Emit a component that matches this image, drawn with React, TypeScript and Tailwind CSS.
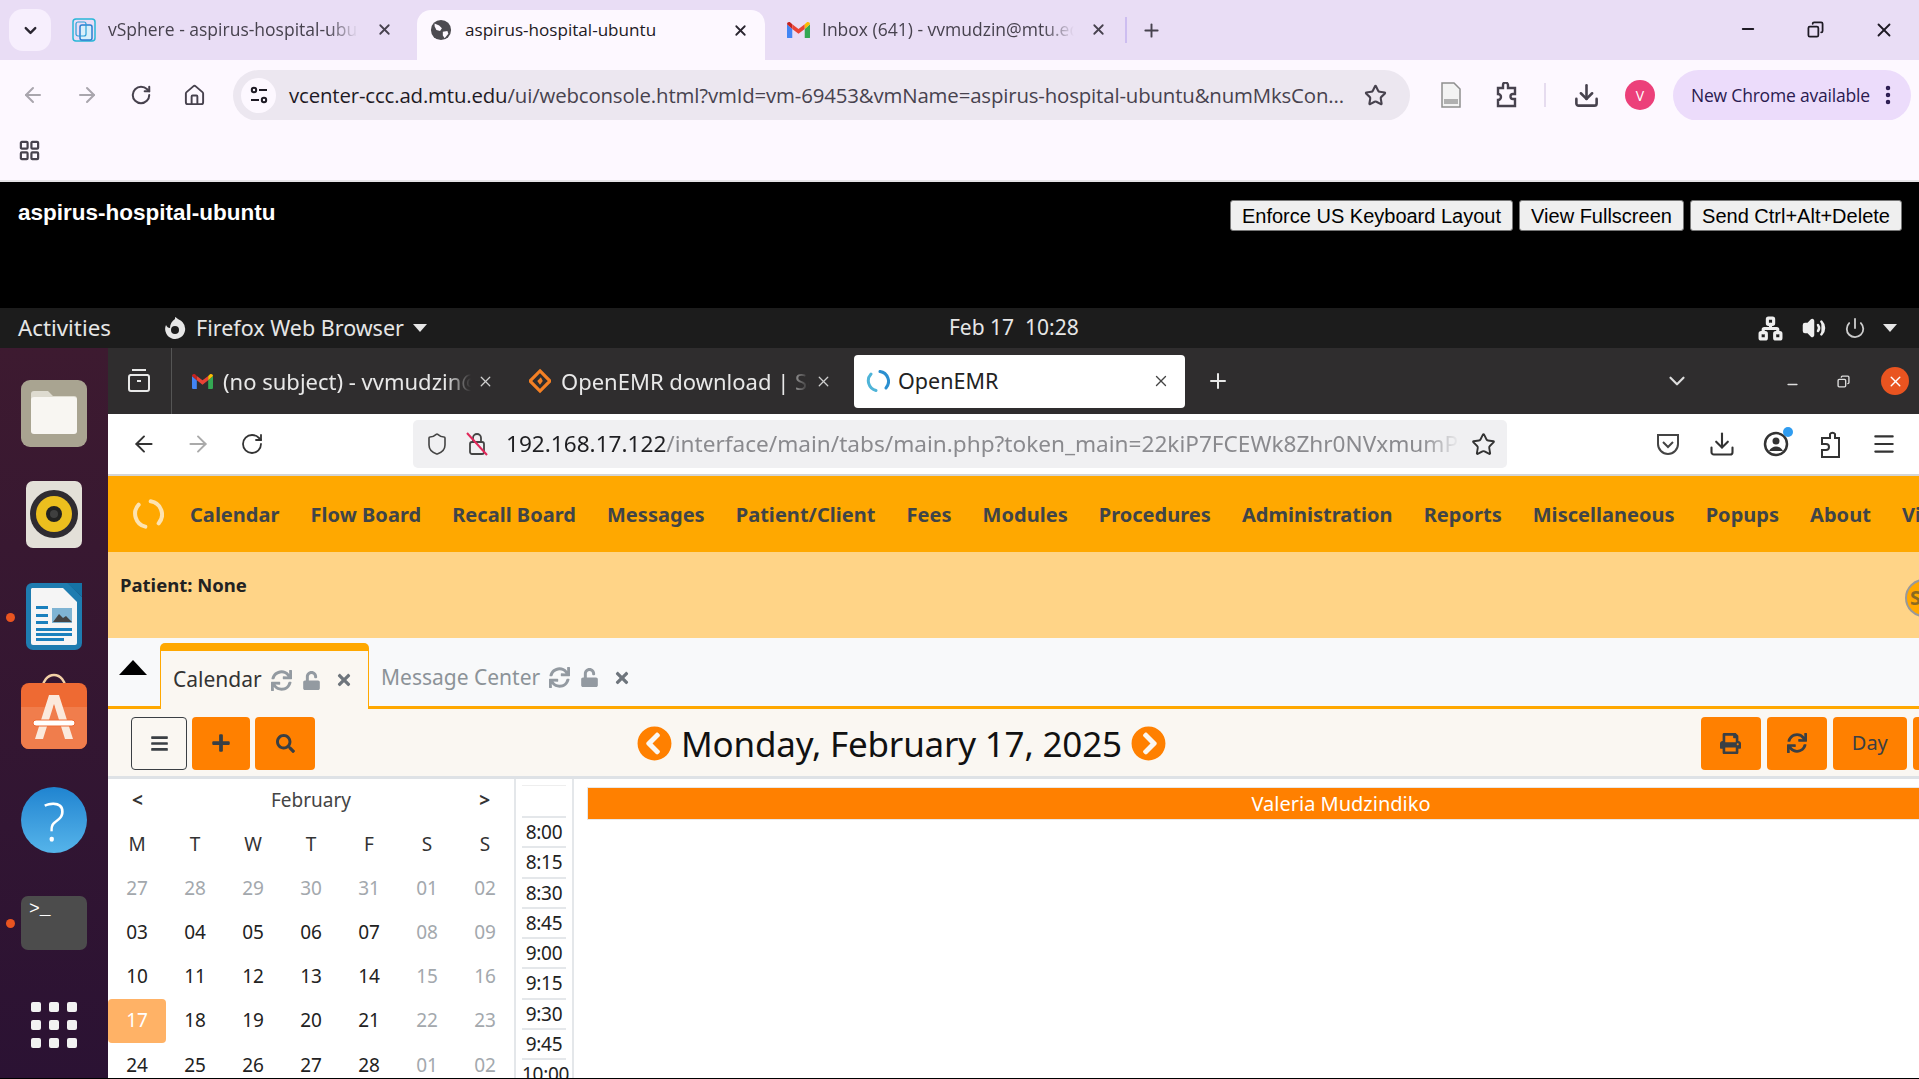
import React from "react";
import { ArrowLeft, ArrowRight, RotateCw, Home, ChevronDown, X, Plus, Minus, Star, Download, EllipsisVertical, LayoutGrid, Shield, Menu, Volume2, Power, Network, Copy } from "lucide-react";
import { FaSync, FaUnlock, FaTimes, FaBars, FaPlus, FaSearch, FaPrint, FaChevronCircleLeft, FaChevronCircleRight } from "react-icons/fa";
import { FiChevronDown } from "react-icons/fi";

const GmailM = ({ s = 24 }: { s?: number }) => (
  <svg width={s} height={s * 0.78} viewBox="0 0 24 18" className="shrink-0">
    <path d="M0 3v13.5A1.5 1.5 0 0 0 1.500 18H5.500V8l-5.500-5z" fill="#4285f4" />
    <path d="M18.500 18h4A1.500 1.500 0 0 0 24 16.500V3l-5.500 5z" fill="#34a853" />
    <path d="M0 3l5.500 5V3L3.500 1.200C2 0 0 1 0 3z" fill="#c5221f" />
    <path d="M5.500 3v5L12 13l6.500-5V3L12 8z" fill="#ea4335" />
    <path d="M18.500 3v5L24 3c0-2-2-3-3.500-1.800z" fill="#fbbc04" />
  </svg>
);

const Spinner = ({ s, c1, c2 }: { s: number; c1: string; c2: string }) => (
  <svg width={s} height={s} viewBox="0 0 24 24" fill="none" className="shrink-0">
    <path d="M14 2.500A10 10 0 0 1 20 19" stroke={c1} strokeWidth="3" strokeLinecap="round" />
    <path d="M10 21.500A10 10 0 0 1 5 5" stroke={c2} strokeWidth="3" strokeLinecap="round" />
  </svg>
);

const ChromeTabBar = () => (
  <div className="h-[60px] bg-[#e9ddf5] flex items-start relative text-[#47424e] text-[17.500px]">
    <div className="ml-[9px] mt-[9px] w-[42px] h-[42px] rounded-[14px] bg-[#f7effd] flex items-center justify-center">
      <ChevronDown size={19} strokeWidth={3} color="#2a2630" />
    </div>
    <div className="ml-[21px] w-[345px] h-[60px] flex items-center pb-[1px]">
      <svg width="24" height="24" viewBox="0 0 24 24" fill="none" className="shrink-0">
        <rect x="1" y="1" width="22" height="22" rx="3" stroke="#29b6d8" strokeWidth="1.500" />
        <rect x="8" y="7" width="12" height="15" rx="2" stroke="#2a7fd0" strokeWidth="1.500" fill="#d9effa" />
        <rect x="4" y="4" width="10" height="14" rx="2" stroke="#2a9fd8" strokeWidth="1.200" />
      </svg>
      <span className="ml-[12px] w-[250px] overflow-hidden whitespace-nowrap [mask-image:linear-gradient(to_right,black_88%,transparent)] font-['Open_Sans',sans-serif]">vSphere - aspirus-hospital-ubuntu</span>
      <X size={17} strokeWidth={2.500} className="ml-[18px]" color="#47424e" />
    </div>
    <div className="mt-[10px] w-[348px] h-[50px] bg-[#fdf8ff] rounded-t-[14px] flex items-center pl-[13px] pr-[16px] pb-[10px] text-[#1e1a24] font-['Open_Sans',sans-serif]">
      <svg width="22" height="22" viewBox="0 0 24 24" className="shrink-0">
        <circle cx="12" cy="12" r="11" fill="#4c4a50" />
        <path d="M5 5l5 2 3 3-2 3-4-1-2-4zM14 14l5-1 1 3-4 5-2-3z" fill="#fdf8ff" />
      </svg>
      <span className="ml-[13px] whitespace-nowrap flex-1 text-[17.100px]">aspirus-hospital-ubuntu</span>
      <X size={17} strokeWidth={2.500} color="#2a2630" />
    </div>
    <div className="ml-[22px] w-[338px] h-[60px] flex items-center pb-[1px] font-['Open_Sans',sans-serif]">
      <GmailM s={23} />
      <span className="ml-[12px] w-[252px] overflow-hidden whitespace-nowrap [mask-image:linear-gradient(to_right,black_88%,transparent)]">Inbox (641) - vvmudzin@mtu.edu</span>
      <X size={17} strokeWidth={2.500} className="ml-[16px]" />
    </div>
    <div className="w-[2px] h-[26px] mt-[17px] bg-[#cdbdf0]" />
    <Plus size={21} strokeWidth={2.200} className="ml-[14px] mt-[20px]" color="#47424e" />
    <Minus size={18} strokeWidth={2.500} className="ml-[577px] mt-[20px]" color="#1e1a24" />
    <Copy size={17} strokeWidth={2.500} className="ml-[50px] mt-[21px] -scale-x-100" color="#1e1a24" />
    <X size={22} strokeWidth={2} className="ml-[49px] mt-[19px]" color="#1e1a24" />
  </div>
);

const ChromeToolbar = () => (
  <div className="h-[60px] bg-[#fdf8ff] flex items-center pt-[10px]">
    <ArrowLeft size={24} strokeWidth={2} color="#a9a6ad" className="ml-[21px]" />
    <ArrowRight size={24} strokeWidth={2} color="#a9a6ad" className="ml-[30px]" />
    <RotateCw size={22} strokeWidth={2.200} color="#47424e" className="ml-[31px]" />
    <Home size={23} strokeWidth={2} color="#47424e" className="ml-[31px]" />
    <div className="ml-[27px] w-[1177px] h-[51px] rounded-full bg-[#ece7f0] flex items-center pl-[8px] shrink-0">
      <div className="w-[35px] h-[35px] rounded-full bg-[#fdf8ff] flex items-center justify-center shrink-0">
        <svg width="20" height="20" viewBox="0 0 20 20" fill="none" stroke="#1e1a24" strokeWidth="2">
          <circle cx="5" cy="5" r="2.200" /><path d="M10 5h8M2 15h8" /><circle cx="15" cy="15" r="2.200" />
        </svg>
      </div>
      <span className="ml-[13px] text-[20.400px] whitespace-nowrap font-['Open_Sans',sans-serif] text-[#47424e] tracking-[-0.15px]"><span className="text-[#1e1a24]">vcenter-ccc.ad.mtu.edu</span>/ui/webconsole.html?vmId=vm-69453&amp;vmName=aspirus-hospital-ubuntu&amp;numMksCon...</span>
    </div>
    <Star size={23} strokeWidth={2.200} color="#47424e" className="-ml-[46px]" />
    <svg width="22" height="26" viewBox="0 0 22 26" className="ml-[53px] shrink-0">
      <path d="M2 1h12l6 6v18H2z" fill="#f3f3f3" stroke="#8e8e8e" strokeWidth="1.500" />
      <rect x="4" y="17" width="14" height="5" fill="#b0b0b0" />
    </svg>
    <svg width="24" height="26" viewBox="0 0 24 26" fill="none" stroke="#47424e" strokeWidth="2.400" className="ml-[33px] shrink-0">
      <path d="M3 6h5V3a2.500 2.500 0 0 1 5 0v3h7v6h-2a2.500 2.500 0 0 0 0 5h2v7H3v-6a3 3 0 0 0 0-6z" />
    </svg>
    <div className="ml-[25px] w-[2px] h-[24px] bg-[#e6dcef]" />
    <Download size={27} strokeWidth={2.300} color="#47424e" className="ml-[27px]" />
    <div className="ml-[25px] w-[30px] h-[30px] rounded-full bg-[#ec407a] text-white text-[14px] flex items-center justify-center font-['Open_Sans',sans-serif] shrink-0">V</div>
    <div className="ml-[18px] w-[238px] h-[51px] rounded-full bg-[#ecdcfb] flex items-center pl-[18px] text-[17.500px] text-[#2a1a50] font-['Open_Sans',sans-serif] whitespace-nowrap tracking-[-0.2px] shrink-0">
      New Chrome available
      <EllipsisVertical size={24} strokeWidth={2.500} color="#2a1a50" className="ml-[6px]" />
    </div>
  </div>
);

const Bookmarks = () => (
  <div className="h-[62px] bg-[#fdf8ff] border-b-2 border-[#e5e3e6] flex items-center pl-[18px]">
    <LayoutGrid size={23} strokeWidth={2.300} color="#47424e" />
  </div>
);

const ConsoleBtn = ({ label, w }: { label: string; w: string }) => (
  <button className={`${w} h-[31px] bg-[#efefef] border border-[#767676] rounded-[3px] text-black text-[20px] leading-none font-['Liberation_Sans',sans-serif]`}>{label}</button>
);

const ConsoleBar = () => (
  <div className="h-[126px] bg-black flex items-start justify-between pr-[17px] font-['Liberation_Sans',sans-serif]">
    <div className="ml-[18px] mt-[14px] text-white font-bold text-[22.500px]">aspirus-hospital-ubuntu</div>
    <div className="flex gap-[6px] mt-[18px]">
      <ConsoleBtn label="Enforce US Keyboard Layout" w="w-[283px]" />
      <ConsoleBtn label="View Fullscreen" w="w-[165px]" />
      <ConsoleBtn label="Send Ctrl+Alt+Delete" w="w-[212px]" />
    </div>
  </div>
);

const Tri = ({ ml }: { ml: string }) => (
  <div className={`${ml} w-0 h-0 shrink-0 border-l-[7px] border-r-[7px] border-t-[8px] border-l-transparent border-r-transparent border-t-[#e6e6e6]`} />
);

const UbuntuPanel = () => (
  <div className="h-[40px] bg-[#1c1c1c] flex items-center text-[#e6e6e6] font-['Noto_Sans',sans-serif]">
    <span className="ml-[18px] w-[95px] whitespace-nowrap text-[22.300px]">Activities</span>
    <svg width="24" height="24" viewBox="0 0 24 24" className="ml-[50px] shrink-0">
      <path d="M12 3a10 10 0 1 1-9 6c1 2 2 3 4 3 0-4 2-7 5-9z" fill="#e6e6e6" />
      <circle cx="12" cy="14" r="4" fill="#1c1c1c" />
      <path d="M12 1c4 2 6 5 5 9l-5-2z" fill="#e6e6e6" />
    </svg>
    <span className="ml-[9px] whitespace-nowrap text-[21.500px]">Firefox Web Browser</span>
    <Tri ml="ml-[9px]" />
    <span className="ml-[522px] whitespace-pre text-[21px] w-[150px] shrink-0">Feb 17  10:28</span>
    <Network size={25} strokeWidth={3} color="#eee" className="ml-[659px] shrink-0" />
    <Volume2 size={24} strokeWidth={2.500} color="#eee" fill="#eee" className="ml-[19px] shrink-0" />
    <Power size={22} strokeWidth={2} color="#ccc" className="ml-[18px] shrink-0" />
    <Tri ml="ml-[17px]" />
  </div>
);

const Dock = () => (
  <div className="w-[108px] h-full bg-gradient-to-b from-[#3d1a30] to-[#2b1233] shrink-0 relative flex flex-col items-center pt-[32px]">
    <svg width="66" height="67" viewBox="0 0 66 67" className="shrink-0">
      <rect width="66" height="67" rx="9" fill="#a9a491" />
      <path d="M10 14a3 3 0 0 1 3-3h14l5 5h21a3 3 0 0 1 3 3v31a3 3 0 0 1-3 3H13a3 3 0 0 1-3-3z" fill="#dedbd0" />
      <path d="M10 20a3 3 0 0 1 3-3h40a3 3 0 0 1 3 3v31a3 3 0 0 1-3 3H13a3 3 0 0 1-3-3z" fill="#f8f6f2" />
    </svg>
    <svg width="56" height="67" viewBox="0 0 56 67" className="mt-[34px] shrink-0">
      <rect width="56" height="67" rx="7" fill="#e3e0d8" />
      <circle cx="28" cy="33" r="24" fill="#2f2c31" />
      <circle cx="28" cy="33" r="18" fill="#ecbf1e" />
      <circle cx="28" cy="33" r="8" fill="#222" />
      <circle cx="28" cy="33" r="4" fill="#3f3f3f" />
    </svg>
    <svg width="56" height="67" viewBox="0 0 56 67" className="mt-[35px] shrink-0">
      <path d="M6 0h36l14 14v46a7 7 0 0 1-7 7H7a7 7 0 0 1-7-7V6a6 6 0 0 1 6-6z" fill="#1e7cb0" />
      <path d="M6 5h31l14 14v41a2 2 0 0 1-2 2H7a2 2 0 0 1-2-2V6z" fill="#f5f5f5" />
      <path d="M41 0h15v14z" fill="#1572a5" />
      <path d="M10 23h12v3H10zM10 31h12v3H10zM10 38h12v3H10zM10 45h36v3H10zM10 50h36v3H10zM10 55h28v3H10z" fill="#1a80bd" />
      <rect x="26" y="25" width="20" height="15" fill="#7fb4d3" />
      <path d="M27 39l6-8 4 4 3-2 6 6z" fill="#444" />
    </svg>
    <div className="absolute left-[6px] top-[265px] w-[9px] h-[9px] rounded-full bg-[#e95420]" />
    <svg width="66" height="76" viewBox="0 0 66 76" className="mt-[23px] shrink-0">
      <path d="M22 13c0-4 4-11 11-11s11 7 11 11" fill="none" stroke="#f2d0a6" strokeWidth="2.500" />
      <rect y="10" width="66" height="66" rx="8" fill="#ee6a33" />
      <path d="M0 34h66v34a8 8 0 0 1-8 8H8a8 8 0 0 1-8-8z" fill="#f07d4c" />
      <path d="M28 22h10l14 44h-8l-11-35-11 35h-8z" fill="#fbe9dc" />
      <rect x="12" y="47" width="42" height="6" rx="3" fill="#fff" stroke="#ee6a33" strokeWidth="1" />
    </svg>
    <div className="mt-[38px] w-[66px] h-[66px] shrink-0 rounded-full bg-gradient-to-b from-[#1f84d0] to-[#55b4ea] text-white font-['Open_Sans',sans-serif] font-light text-[54px] leading-[66px] text-center">?</div>
    <div className="mt-[43px] w-[66px] h-[54px] shrink-0 rounded-[7px] bg-[#4c4c4c] text-white font-['Liberation_Mono',monospace] text-[18px] leading-[22px] pl-[8px] pt-[2px]">&gt;_</div>
    <div className="absolute left-[6px] top-[571px] w-[9px] h-[9px] rounded-full bg-[#e95420]" />
    <div className="mt-[52px] grid grid-cols-3 gap-[8px] shrink-0">
      {Array.from({ length: 9 }).map((_, i) => (
        <div key={i} className="w-[10px] h-[10px] rounded-[2px] bg-[#f2f2f2]" />
      ))}
    </div>
  </div>
);

const FxTab = ({ icon, label, ml }: { icon: React.ReactNode; label: string; ml: string }) => (
  <div className={`${ml} flex items-center w-[316px] text-[#e8e8e8] text-[22px] shrink-0`}>
    {icon}
    <span className="ml-[10px] w-[248px] overflow-hidden whitespace-nowrap [mask-image:linear-gradient(to_right,black_90%,transparent)]">{label}</span>
    <X size={17} strokeWidth={1.800} color="#cfcfcf" className="ml-[6px] shrink-0" />
  </div>
);

const FxTabBar = () => (
  <div className="h-[66px] bg-[#2f2d2e] flex items-center shrink-0">
    <div className="w-[64px] h-full border-r border-[#555] flex items-center justify-center shrink-0 pr-[2px]">
      <svg width="24" height="26" viewBox="0 0 24 26" fill="none" stroke="#e8e8e8" strokeWidth="2">
        <path d="M5 2h14M3 7h18" /><rect x="2" y="7" width="20" height="16" rx="2" /><path d="M10 13h4" />
      </svg>
    </div>
    <FxTab ml="ml-[20px]" icon={<GmailM s={21} />} label="(no subject) - vvmudzin@mtu.edu" />
    <FxTab ml="ml-[21px]" icon={
      <svg width="22" height="26" viewBox="0 0 24 24" className="shrink-0"><path d="M12 1l11 11-11 11L1 12z" fill="none" stroke="#f48024" strokeWidth="3.500" /><path d="M13 8l-4 4 3 4 3-4z" fill="#f48024" /></svg>
    } label="OpenEMR download | SourceForge" />
    <div className="ml-[9px] w-[331px] h-[53px] bg-white rounded-[4px] flex items-center pl-[12px] text-[#222] text-[21.500px] shrink-0">
      <Spinner s={24} c1="#2b8fd0" c2="#4fb4d8" />
      <span className="ml-[8px] w-[244px]">OpenEMR</span>
      <X size={18} strokeWidth={1.800} color="#444" className="ml-[10px]" />
    </div>
    <Plus size={24} strokeWidth={2} color="#e8e8e8" className="ml-[21px] shrink-0" />
    <FiChevronDown size={26} color="#ddd" className="ml-[434px] shrink-0" />
    <Minus size={15} strokeWidth={2.500} color="#ddd" className="ml-[95px] mt-[6px] shrink-0" />
    <Copy size={13} strokeWidth={2.500} color="#ddd" className="ml-[37px] -scale-x-100 shrink-0" />
    <div className="ml-[31px] w-[28px] h-[28px] rounded-full bg-[#e95420] flex items-center justify-center shrink-0">
      <X size={17} strokeWidth={2} color="#fff" />
    </div>
  </div>
);

const FxToolbar = () => (
  <div className="h-[62px] bg-white border-b-2 border-[#d5d5d5] flex items-center shrink-0">
    <ArrowLeft size={26} strokeWidth={1.800} color="#333" className="ml-[23px] shrink-0" />
    <ArrowRight size={26} strokeWidth={1.800} color="#aaa" className="ml-[28px] shrink-0" />
    <RotateCw size={24} strokeWidth={1.800} color="#333" className="ml-[29px] shrink-0" />
    <div className="ml-[149px] w-[1094px] h-[48px] rounded-[5px] bg-[#f0f0f2] flex items-center pl-[14px] shrink-0">
      <Shield size={24} strokeWidth={1.600} color="#444" className="shrink-0 -ml-[2px]" />
      <svg width="24" height="26" viewBox="0 0 24 26" fill="none" stroke="#444" strokeWidth="1.800" className="ml-[16px] shrink-0">
        <rect x="5" y="11" width="14" height="12" rx="2" /><path d="M8 11V7a4 4 0 0 1 8 0v4" /><path d="M2 2l20 22" stroke="#e0285a" strokeWidth="2" />
      </svg>
      <span className="ml-[17px] w-[954px] overflow-hidden whitespace-nowrap text-[22.600px] text-[#8a8a8e] [mask-image:linear-gradient(to_right,black_96%,transparent)]"><span className="text-[#1f1f22]">192.168.17.122</span>/interface/main/tabs/main.php?token_main=22kiP7FCEWk8Zhr0NVxmumPQ</span>
    </div>
    <Star size={25} strokeWidth={1.800} color="#333" className="-ml-[36px] shrink-0" />
    <svg width="24" height="26" viewBox="0 0 24 26" fill="none" stroke="#444" strokeWidth="2" className="ml-[160px] shrink-0">
      <path d="M2 4h20v9a10 10 0 0 1-20 0z" /><path d="M7 11l5 5 5-5" />
    </svg>
    <Download size={28} strokeWidth={1.800} color="#333" className="ml-[28px] shrink-0" />
    <div className="ml-[27px] relative shrink-0">
      <svg width="26" height="28" viewBox="0 0 26 28" fill="none">
        <circle cx="13" cy="14" r="11" stroke="#333" strokeWidth="2.500" />
        <circle cx="13" cy="11" r="3.500" fill="#333" /><path d="M6 21c3-6 11-6 14 0" fill="#333" />
      </svg>
      <div className="absolute -top-[3px] right-[-4px] w-[10px] h-[10px] rounded-full bg-[#2f9cf0]" />
    </div>
    <svg width="24" height="30" viewBox="0 0 24 30" fill="none" stroke="#333" strokeWidth="2" className="ml-[29px] shrink-0">
      <path d="M9 9h3V5a3 3 0 0 1 5 0v4h4v19H4v-7h4a3 3 0 0 0 0-6H4V9z" />
    </svg>
    <Menu size={26} strokeWidth={2} color="#333" className="ml-[29px] shrink-0" />
  </div>
);

const navItems = ["Calendar", "Flow Board", "Recall Board", "Messages", "Patient/Client", "Fees", "Modules", "Procedures", "Administration", "Reports", "Miscellaneous", "Popups", "About", "Visit"];

const Nav = () => (
  <div className="h-[76px] bg-[#ffa800] flex items-center shrink-0 overflow-hidden whitespace-nowrap">
    <div className="ml-[24px] w-[58px] shrink-0"><Spinner s={32} c1="#fde3b0" c2="#fde3b0" /></div>
    <div className="flex gap-[31px] text-[20px] font-bold text-[#3f4448] tracking-[0.03px] pt-[1px]">
      {navItems.map((n) => <span key={n}>{n}</span>)}
    </div>
  </div>
);

const PatientBar = () => (
  <div className="h-[86px] bg-[#ffd487] flex items-start justify-between shrink-0 overflow-hidden">
    <span className="ml-[12px] mt-[19px] text-[18.500px] font-bold text-[#222]">Patient: None</span>
    <div className="mt-[27px] -mr-[28px] w-[42px] h-[38px] rounded-full bg-[#ffa800] border-2 border-[#999] pl-[3px] text-[#8a6a20] font-bold text-[20px] leading-[34px]">S</div>
  </div>
);

const TabIcons = ({ c }: { c: string }) => (
  <span className="flex items-center">
    <FaSync size={21} color={c} className="ml-[9px]" />
    <FaUnlock size={19} color={c} className="ml-[10px]" />
    <FaTimes size={18} color="#6e757c" className="ml-[14px]" />
  </span>
);

const TabStrip = () => (
  <div className="h-[71px] bg-[#f8f9fa] border-b-[3px] border-[#ffa800] flex items-end shrink-0 pl-[11px]">
    <div className="w-0 h-0 mb-[31px] border-l-[14px] border-r-[14px] border-b-[15px] border-l-transparent border-r-transparent border-b-black" />
    <div className="ml-[13px] w-[209px] h-[66px] -mb-[3px] bg-[#faf7f2] border-t-[8px] border-x border-[#ffa800] rounded-t-[5px] flex items-center pl-[12px] text-[21px] text-[#333]">
      <span>Calendar</span><TabIcons c="#939aa1" />
    </div>
    <div className="ml-[12px] h-[66px] flex items-center pt-[9px] text-[21px] text-[#8c9398]">
      <span>Message Center</span><TabIcons c="#939aa1" />
    </div>
  </div>
);

const OrangeBtn = ({ w, children }: { w: string; children: React.ReactNode }) => (
  <div className={`${w} h-[53px] bg-[#ff8000] rounded-[4px] flex items-center justify-center text-[#3a3f44] shrink-0`}>{children}</div>
);

const CalToolbar = () => (
  <div className="h-[67px] bg-[#faf7f2] flex items-center shrink-0 overflow-hidden pt-[1px]">
    <div className="ml-[23px] w-[56px] h-[53px] border border-[#3a3f44] rounded-[4px] flex items-center justify-center shrink-0"><FaBars size={19} color="#3a3f44" /></div>
    <div className="ml-[5px] flex gap-[5px]">
      <OrangeBtn w="w-[58px]"><FaPlus size={20} /></OrangeBtn>
      <OrangeBtn w="w-[60px]"><FaSearch size={19} /></OrangeBtn>
    </div>
    <FaChevronCircleLeft size={35} color="#ff8000" className="ml-[322px] shrink-0" />
    <span className="ml-[9px] w-[441px] text-[35px] whitespace-nowrap text-[#111] tracking-[-0.2px] pt-[2px]">Monday, February 17, 2025</span>
    <FaChevronCircleRight size={35} color="#ff8000" className="ml-[9px] shrink-0" />
    <div className="ml-[535px] flex gap-[6px]">
      <OrangeBtn w="w-[60px]"><FaPrint size={21} /></OrangeBtn>
      <OrangeBtn w="w-[60px]"><FaSync size={20} /></OrangeBtn>
      <OrangeBtn w="w-[74px]"><span className="text-[20px]">Day</span></OrangeBtn>
      <OrangeBtn w="w-[74px]"><span className="text-[20px]">Week</span></OrangeBtn>
    </div>
  </div>
);

const head = ["M", "T", "W", "T", "F", "S", "S"];
const cal: [string, string][] = [
  ["27", "o"], ["28", "o"], ["29", "o"], ["30", "o"], ["31", "o"], ["01", "o"], ["02", "o"],
  ["03", "n"], ["04", "n"], ["05", "n"], ["06", "n"], ["07", "n"], ["08", "o"], ["09", "o"],
  ["10", "n"], ["11", "n"], ["12", "n"], ["13", "n"], ["14", "n"], ["15", "o"], ["16", "o"],
  ["17", "t"], ["18", "n"], ["19", "n"], ["20", "n"], ["21", "n"], ["22", "o"], ["23", "o"],
  ["24", "n"], ["25", "n"], ["26", "n"], ["27", "n"], ["28", "n"], ["01", "o"], ["02", "o"],
];

const MiniCal = () => (
  <div className="w-[406px] bg-white shrink-0 text-[19px]">
    <div className="flex items-center justify-between h-[44px] px-[24px] text-[#333] -mt-[1px]">
      <span className="font-bold">&lt;</span><span className="text-[#444]">February</span><span className="font-bold">&gt;</span>
    </div>
    <div className="grid grid-cols-[repeat(7,58px)]">
      {head.map((h, i) => <div key={i} className="h-[44px] flex items-center justify-center text-[#333]">{h}</div>)}
      {cal.map(([d, k], i) => (
        <div key={i} className={`h-[44.200px] flex items-center justify-center ${k === "o" ? "text-[#a3a8ad]" : k === "t" ? "bg-[#ffb266] text-white rounded-[4px]" : "text-[#222]"}`}>{d}</div>
      ))}
    </div>
  </div>
);

const times = ["8:00", "8:15", "8:30", "8:45", "9:00", "9:15", "9:30", "9:45", "10:00"];

const TimeCol = () => (
  <div className="w-[60px] border-x-2 border-[#e4e7ea] bg-white shrink-0 px-[6px] pt-[6px]">
    <div className="h-[31px] border-t border-[#eee]" />
    {times.map((t) => (
      <div key={t} className="h-[30.250px] border-t-2 border-[#e4e7ea] text-[19px] leading-[29px] text-[#222] text-center whitespace-nowrap tracking-[-0.3px]">{t}</div>
    ))}
  </div>
);

const Events = () => (
  <div className="flex-1 bg-white pl-[13px] pt-[8px] min-w-0 overflow-hidden">
    <div className="w-[1508px] h-[33px] bg-[#ff8000] border border-[#e8e8e8] text-white text-[20px] leading-[31px] text-center">Valeria Mudzindiko</div>
  </div>
);

export default function App() {
  return (
    <div className="w-[1919px] h-[1079px] overflow-hidden flex flex-col bg-black font-['Noto_Sans',sans-serif]">
      <ChromeTabBar />
      <ChromeToolbar />
      <Bookmarks />
      <ConsoleBar />
      <UbuntuPanel />
      <div className="h-[730px] flex min-h-0 shrink-0">
        <Dock />
        <div className="flex-1 flex flex-col min-w-0 overflow-hidden">
          <FxTabBar />
          <FxToolbar />
          <Nav />
          <PatientBar />
          <TabStrip />
          <CalToolbar />
          <div className="flex-1 flex border-t-[3px] border-[#dee2e6] min-h-0 overflow-hidden">
            <MiniCal />
            <TimeCol />
            <Events />
          </div>
        </div>
      </div>
      <div className="h-[1px] bg-black" />
    </div>
  );
}
